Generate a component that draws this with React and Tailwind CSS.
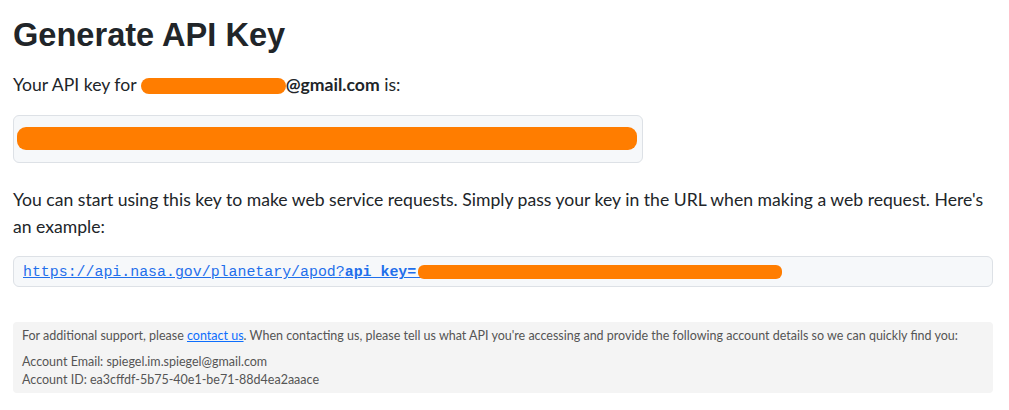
import React from "react";

const KEY_PLACEHOLDER = "\u00a0".repeat(40);

export default function App() {
  return (
    <div className="min-h-screen bg-white font-['Lato','Open_Sans',sans-serif] text-[#212529]">
      <div className="ml-[13px] w-[980px] pt-[16px]">
        <h1 className="font-['Liberation_Sans',Arial,sans-serif] text-[32.6px] font-bold leading-[1.15] text-[#212529]">
          Generate API Key
        </h1>

        <p className="mt-[18px] text-[17.6px] leading-[27px]">
          Your API key for{" "}
          <span className="inline-block h-[16px] w-[145px] rounded-full bg-[#ff7d00] align-[-3px]" />
          <b className="font-bold">@gmail.com</b> is:
        </p>

        <div className="mt-[17px] w-[630px] rounded-md border border-[#dde1e6] bg-[#f6f8fa] pl-[3px] pt-[11px] pb-[12px]">
          <div className="h-[23px] w-[620px] rounded-[9px] bg-[#ff7d00]" />
        </div>

        <p className="mt-[23px] text-[17.6px] leading-[27px]">
          You can start using this key to make web service requests. Simply pass your key in the URL when making a web
          request. Here's an example:
        </p>

        <div className="mt-[16px] rounded-md border border-[#dde1e6] bg-[#f6f8fa] pl-[9px] pt-[5px] pb-[4px] font-['Liberation_Mono',monospace] text-[14.9px] leading-[20px]">
          <a href="#" className="text-[#1f6feb] underline decoration-[#1f6feb]">
            https://api.nasa.gov/planetary/apod?
            <b className="font-bold">api_key=</b>
            <span className="relative">
              <span className="text-transparent underline decoration-[#1f6feb]">{KEY_PLACEHOLDER}</span>
              <span className="absolute left-[2px] top-[1px] h-[14px] w-[364px] rounded-[6px] bg-[#ff7d00]" />
            </span>
          </a>
        </div>

        <div className="mt-[35px] rounded-[4px] bg-[#f4f4f4] px-[9px] pt-[5px] pb-[5px] text-[12.5px] leading-[17.5px] text-[#555555]">
          <p>
            For additional support, please{" "}
            <a href="#" className="text-[#0d6efd] underline">
              contact us
            </a>
            . When contacting us, please tell us what API you're accessing and provide the following account details so
            we can quickly find you:
          </p>
          <p className="mt-[8.5px]">
            Account Email: spiegel.im.spiegel@gmail.com
            <br />
            Account ID: ea3cffdf-5b75-40e1-be71-88d4ea2aaace
          </p>
        </div>
      </div>
    </div>
  );
}
